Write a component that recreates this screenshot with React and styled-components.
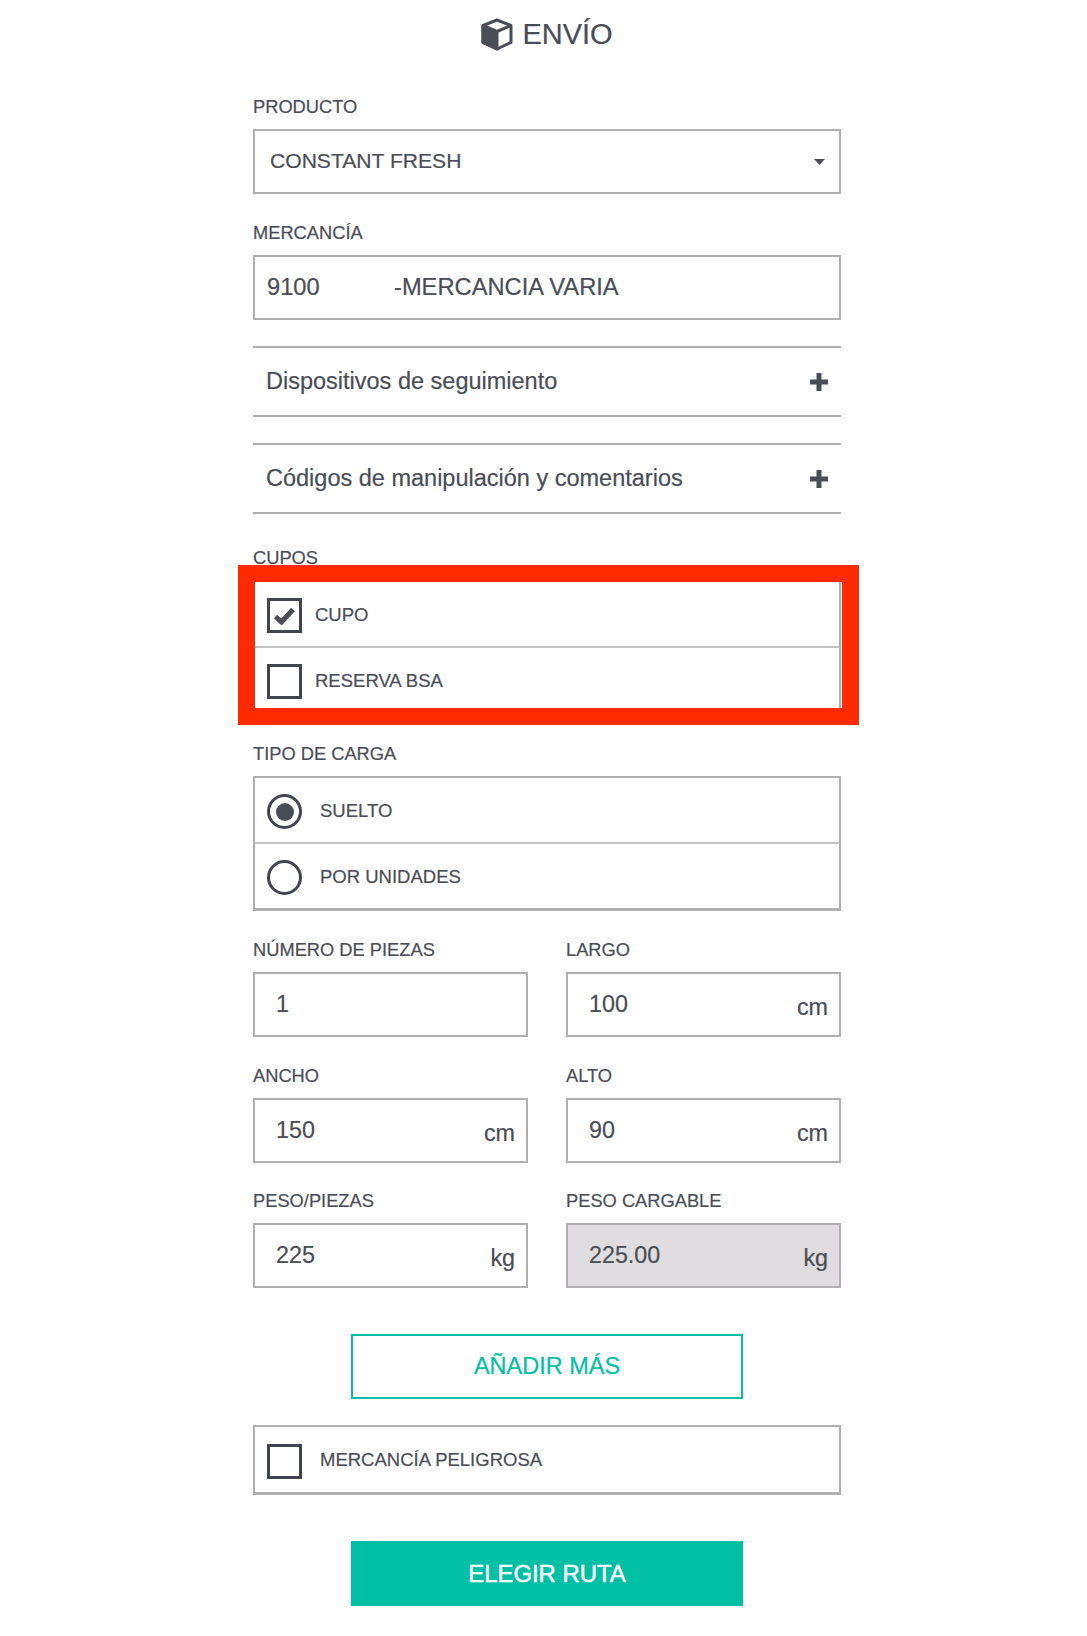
import React from 'react';
import styled, { createGlobalStyle } from 'styled-components';

const Global = createGlobalStyle`
  html, body { margin: 0; padding: 0; background: #fff; }
  body {
    font-family: "Liberation Sans", Arial, sans-serif;
    color: #4a4d55;
    -webkit-text-stroke: 0.2px currentColor;
  }
`;

const Page = styled.main`
  box-sizing: border-box;
  width: 1087px;
  height: 1636px;
  overflow: hidden;
  padding-left: 253px;
`;
const Column = styled.div`
  width: 588px;
  display: flex;
  flex-direction: column;
`;
const Title = styled.h1`
  margin: 0 0 26px;
  height: 68px;
  display: flex;
  align-items: center;
  justify-content: center;
  gap: 9px;
  font-size: 29px;
  font-weight: 400;
  color: #4a4d55;
`;
const Field = styled.section`
  position: relative;
  margin-bottom: 26px;
`;
const Label = styled.div`
  height: 24px;
  line-height: 26px;
  margin-bottom: 11px;
  font-size: 18.3px;
  white-space: nowrap;
`;
const Box = styled.div`
  box-sizing: border-box;
  height: 65px;
  border: 2px solid #b0b0b0;
  background: ${p => (p.$disabled ? '#dfdde0' : '#fff')};
  display: flex;
  align-items: center;
  justify-content: space-between;
  padding: 0 ${p => p.$right ?? 14}px 0 ${p => p.$left ?? 14}px;
  font-size: 23.3px;
  white-space: pre;
`;
const SelectText = styled.span`
  font-size: 21.1px;
  margin-bottom: 2px;
`;
const Value = styled.span`
  font-size: 23.3px;
`;
const Code = styled.span`
  display: inline-block;
  width: 127px;
  font-size: 23.7px;
`;
const Description = styled.span`
  flex: 1;
  font-size: 23.7px;
`;
const Unit = styled.span`
  margin-top: 6px;
`;
const Accordion = styled.div`
  box-sizing: border-box;
  height: ${p => p.$h}px;
  margin-bottom: ${p => p.$after}px;
  border-top: 2px solid #b0b0b0;
  border-bottom: 2px solid #b0b0b0;
  display: flex;
  align-items: center;
  justify-content: space-between;
  padding: 0 13px 0 13px;
  font-size: 23.5px;
`;
const Group = styled.div`
  box-sizing: border-box;
  border: 2px solid #b0b0b0;
  border-bottom-width: 3px;
  background: #fff;
  margin-bottom: ${p => p.$after ?? 0}px;
`;
const Row = styled.div`
  box-sizing: border-box;
  height: ${p => p.$h}px;
  display: flex;
  align-items: center;
  padding: 3px 0 0 12px;
  gap: ${p => p.$gap}px;
  font-size: 18.5px;
  & + & { border-top: 2px solid #c4c4c4; }
`;
const RowText = styled.span`
  margin-bottom: 2px;
  white-space: nowrap;
`;
const CheckBox = styled.span`
  box-sizing: border-box;
  width: 35px;
  height: 35px;
  flex: none;
  border: 3px solid #42454f;
  display: flex;
  align-items: center;
  justify-content: center;
`;
const Radio = styled.span`
  box-sizing: border-box;
  width: 35px;
  height: 35px;
  flex: none;
  border: 3px solid #42454f;
  border-radius: 50%;
  display: flex;
  align-items: center;
  justify-content: center;
  &::after {
    content: '';
    display: ${p => (p.$on ? 'block' : 'none')};
    width: 18px;
    height: 18px;
    border-radius: 50%;
    background: #4a4d55;
  }
`;
const Highlight = styled.div`
  position: absolute;
  left: -15px;
  right: -18px;
  top: 20px;
  height: 160px;
  box-sizing: border-box;
  border: 17px solid #ff2a00;
  pointer-events: none;
`;
const Grid = styled.div`
  display: grid;
  grid-template-columns: 275px 275px;
  column-gap: 38px;
  row-gap: 25.5px;
  margin-bottom: 46px;
`;
const Button = styled.button`
  box-sizing: border-box;
  display: block;
  align-self: center;
  width: 392px;
  height: 65px;
  margin-bottom: ${p => p.$after}px;
  border: 2px solid #00bfa5;
  border-radius: 0;
  background: ${p => (p.$solid ? '#00bfa5' : '#fff')};
  color: ${p => (p.$solid ? '#fff' : '#00bfa5')};
  font-family: inherit;
  font-size: ${p => (p.$solid ? 23.9 : 23.5)}px;
  -webkit-text-stroke: ${p => (p.$solid ? 0.5 : 0.2)}px currentColor;
  padding: 0;
`;

const CubeIcon = () => (
  <svg width="32" height="33" viewBox="0 0 32 33" aria-hidden="true">
    <path d="M16 2 30 7.5V24.5L16 31 2 24.5V7.5Z" fill="#fff" stroke="#4a4d55" strokeWidth="3" strokeLinejoin="round" />
    <path d="M2 7.5 16 13.5V31L2 24.5Z" fill="#4a4d55" stroke="#4a4d55" strokeWidth="3" strokeLinejoin="round" />
    <path d="M16 13.5 30 7.5" stroke="#4a4d55" strokeWidth="3" fill="none" />
  </svg>
);
const Caret = () => (
  <svg width="11" height="6" viewBox="0 0 11 6" aria-hidden="true">
    <path d="M0 0H11L5.5 6Z" fill="#4a4d55" />
  </svg>
);
const PlusIcon = () => (
  <svg width="18" height="18" viewBox="0 0 18 18" aria-hidden="true">
    <path d="M6.5 0h5v6.5H18v5h-6.5V18h-5v-6.5H0v-5h6.5Z" fill="#4a4d55" />
  </svg>
);
const CheckIcon = () => (
  <svg width="21" height="18" viewBox="0 0 21 18" aria-hidden="true">
    <path d="M1.5 9.5 7.5 15 19 2.5" fill="none" stroke="#4a4d55" strokeWidth="5" />
  </svg>
);

const measures = [
  { label: 'NÚMERO DE PIEZAS', value: '1' },
  { label: 'LARGO', value: '100', unit: 'cm' },
  { label: 'ANCHO', value: '150', unit: 'cm' },
  { label: 'ALTO', value: '90', unit: 'cm' },
  { label: 'PESO/PIEZAS', value: '225', unit: 'kg' },
  { label: 'PESO CARGABLE', value: '225.00', unit: 'kg', disabled: true },
];

export default function App() {
  return (
    <Page>
      <Global />
      <Column>
        <Title><CubeIcon />ENVÍO</Title>

        <Field>
          <Label>PRODUCTO</Label>
          <Box $left={15} $right={14}>
            <SelectText>CONSTANT FRESH</SelectText>
            <Caret />
          </Box>
        </Field>

        <Field>
          <Label>MERCANCÍA</Label>
          <Box $left={12}>
            <Code>9100</Code>
            <Description>-MERCANCIA VARIA</Description>
          </Box>
        </Field>

        <Accordion $h={71} $after={26}>Dispositivos de seguimiento<PlusIcon /></Accordion>
        <Accordion $h={71} $after={31}>Códigos de manipulación y comentarios<PlusIcon /></Accordion>

        <Field>
          <Label>CUPOS</Label>
          <Group>
            <Row $h={64} $gap={13}><CheckBox><CheckIcon /></CheckBox><RowText>CUPO</RowText></Row>
            <Row $h={66} $gap={13}><CheckBox /><RowText>RESERVA BSA</RowText></Row>
          </Group>
          <Highlight />
        </Field>

        <Field>
          <Label>TIPO DE CARGA</Label>
          <Group>
            <Row $h={64} $gap={18}><Radio $on /><RowText>SUELTO</RowText></Row>
            <Row $h={66} $gap={18}><Radio /><RowText>POR UNIDADES</RowText></Row>
          </Group>
        </Field>

        <Grid>
          {measures.map(m => (
            <div key={m.label}>
              <Label>{m.label}</Label>
              <Box $left={21} $right={11} $disabled={m.disabled}>
                <Value>{m.value}</Value>
                {m.unit && <Unit>{m.unit}</Unit>}
              </Box>
            </div>
          ))}
        </Grid>

        <Button $after={26}>AÑADIR MÁS</Button>

        <Group $after={46}>
          <Row $h={65} $gap={18}><CheckBox /><RowText>MERCANCÍA PELIGROSA</RowText></Row>
        </Group>

        <Button $solid $after={0}>ELEGIR RUTA</Button>
      </Column>
    </Page>
  );
}
